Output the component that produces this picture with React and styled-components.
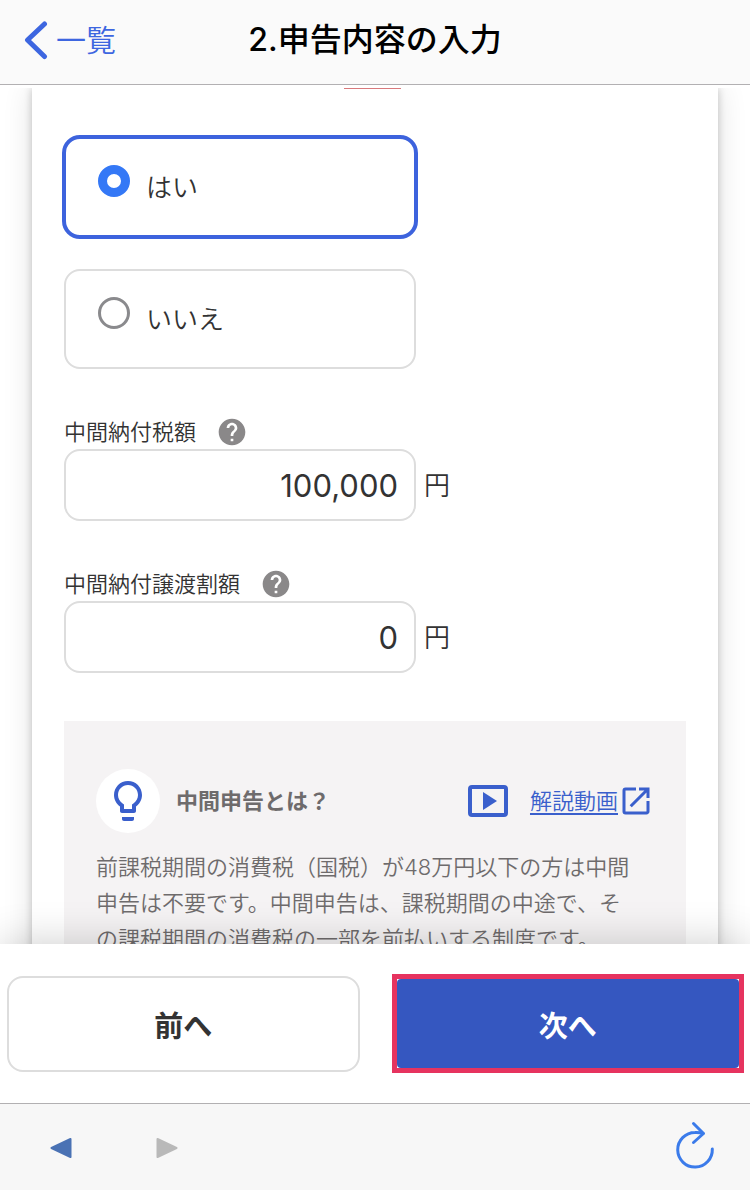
import React, { useState } from 'react';
import styled, { createGlobalStyle, css } from 'styled-components';
import { MdHelp, MdOpenInNew } from 'react-icons/md';

const GlobalStyle = createGlobalStyle`
  * {
    box-sizing: border-box;
  }

  body {
    margin: 0;
    background: #fff;
    color: #333;
    font-family: Inter, "Noto Sans CJK JP", sans-serif;
    font-size: 22px;
    font-weight: 350;
  }

  button, input {
    font: inherit;
    color: inherit;
  }
`;

const Page = styled.div`
  display: flex;
  flex-direction: column;
  height: 100vh;
`;

const Header = styled.header`
  display: grid;
  grid-template-columns: 1fr auto 1fr;
  align-items: center;
  flex: none;
  height: 85px;
  padding: 0 24px 4px;
  border-bottom: 1px solid #b2b0b2;
  background: #fafafa;
`;

const BackLink = styled.a`
  display: flex;
  align-items: center;
  gap: 8px;
  color: #3d66e0;
  font-size: 30px;
  line-height: 40px;
  text-decoration: none;
`;

const PageTitle = styled.h1`
  margin: 0;
  color: #000;
  font-size: 32px;
  font-weight: 500;
  line-height: 40px;
`;

const Content = styled.main`
  flex: 1;
  min-height: 0;
  margin-top: 3px;
  padding: 0 32px;
  overflow: hidden;
`;

const Card = styled.form`
  min-height: 100%;
  padding: 0 32px;
  background: #fff;
  box-shadow: 0 0 8px rgba(0, 0, 0, 0.2), 0 0 28px rgba(0, 0, 0, 0.12);
`;

const Underline = styled.div`
  width: 57px;
  height: 1px;
  margin: 0 auto 48px 280px;
  background: #d9797c;
`;

const Options = styled.div`
  display: flex;
  flex-direction: column;
  gap: 32px;
`;

const Option = styled.label`
  display: flex;
  align-items: center;
  gap: 16px;
  width: 352px;
  height: 100px;
  padding: 0 32px 4px;
  border: 2px solid #ddd;
  border-radius: 16px;
  font-size: 26px;

  ${({ $selected }) => $selected && css`
    width: 356px;
    height: 104px;
    margin: -2px;
    border: 4px solid #3d63dd;
    border-radius: 18px;
  `}
`;

const Radio = styled.input`
  appearance: none;
  width: 32px;
  height: 32px;
  margin: 0 0 8px;
  border: 3px solid #8a8a8d;
  border-radius: 50%;
  background: #fff;

  &:checked {
    border: 9px solid #3478f6;
  }
`;

const Field = styled.div`
  margin-top: 48px;
`;

const FieldHead = styled.div`
  display: flex;
  align-items: center;
  gap: 20px;
  height: 32px;
  padding-bottom: 2px;

  > label {
    padding-bottom: 4px;
  }
`;

const HelpButton = styled.button`
  display: flex;
  padding: 0;
  border: 0;
  background: none;
  color: #8a8889;
`;

const FieldBody = styled.div`
  display: flex;
  align-items: center;
  gap: 8px;
  font-size: 26px;

  > span {
    padding-bottom: 4px;
  }
`;

const AmountInput = styled.input`
  width: 352px;
  height: 72px;
  padding: 0 16px;
  border: 2px solid #ddd;
  border-radius: 16px;
  background: #fff;
  font-family: Inter, sans-serif;
  font-size: 31px;
  font-weight: 400;
  text-align: right;
`;

const Tip = styled.section`
  margin-top: 48px;
  padding: 48px 32px;
  background: #f5f3f4;
  color: #6e6b6c;
`;

const TipHead = styled.div`
  display: flex;
  align-items: center;
`;

const TipIcon = styled.span`
  display: flex;
  align-items: center;
  justify-content: center;
  width: 64px;
  height: 64px;
  border-radius: 50%;
  background: #fff;
  color: #3a5fcc;
`;

const TipTitle = styled.h2`
  flex: 1;
  margin: 0 16px;
  padding-bottom: 4px;
  font-size: 22px;
  font-weight: 600;
`;

const VideoLink = styled.a`
  display: flex;
  align-items: center;
  color: #3a5fcc;
  text-underline-offset: 4px;

  > span {
    margin-left: 22px;
    padding-bottom: 4px;
  }
`;

const TipText = styled.p`
  margin: 16px 12px 0 0;
  line-height: 36px;
`;

const Actions = styled.div`
  position: relative;
  display: grid;
  grid-template-columns: 1fr 1fr;
  align-items: center;
  gap: 32px;
  flex: none;
  padding: 30px 6px 30px 7px;
  background: #fff;
  box-shadow: 0 0 40px rgba(0, 0, 0, 0.2);
`;

const ActionButton = styled.button`
  height: 96px;
  padding: 0;
  border: 2px solid #ddd;
  border-radius: 16px;
  background: #fff;
  font-size: 29px;
  font-weight: 600;
`;

const Highlight = styled.div`
  display: grid;
  border: 5px solid #e6335f;
`;

const NextButton = styled(ActionButton)`
  height: 89px;
  border: 0;
  border-radius: 4px;
  background: #3557c0;
  color: #fff;
`;

const Toolbar = styled.nav`
  position: relative;
  display: flex;
  align-items: center;
  flex: none;
  gap: 84px;
  height: 87px;
  padding: 0 35px 0 50px;
  border-top: 1px solid #b2b0b2;
  background: #f7f7f7;
`;

const ToolButton = styled.button`
  display: flex;
  padding: 2px 0 0;
  border: 0;
  background: none;

  &:last-child {
    margin-left: auto;
    padding: 0 0 4px;
  }
`;

function ChevronIcon() {
  return (
    <svg width="24" height="40" viewBox="0 0 24 40" fill="none" stroke="currentColor" strokeWidth="5" strokeLinecap="round" strokeLinejoin="round">
      <path d="M20.500 4L3.500 20L20.500 36.500" />
    </svg>
  );
}

function BulbIcon() {
  return (
    <svg width="48" height="48" viewBox="0 0 24 24" fill="currentColor" fillRule="evenodd">
      <path d="M12 2C8.100 2 5 5.100 5 9c0 2.400 1.200 4.500 3 5.700V17c0 .6.4 1 1 1h6c.6 0 1-.4 1-1v-2.300c1.800-1.200 3-3.300 3-5.700 0-3.900-3.100-7-7-7zm0 2c2.800 0 5 2.200 5 5 0 1.800-.9 3.300-2.300 4.200l-.7.5V16h-4v-2.300l-.7-.5C7.900 12.300 7 10.800 7 9c0-2.800 2.200-5 5-5z" />
      <path d="M9 20h6v1c0 .6-.4 1-1 1h-4c-.6 0-1-.4-1-1z" />
    </svg>
  );
}

function PlayIcon() {
  return (
    <svg width="40" height="32" viewBox="0 0 40 32">
      <rect x="2" y="2" width="36" height="28" rx="2" fill="none" stroke="currentColor" strokeWidth="4" />
      <path d="M15 7v18l14-9z" fill="currentColor" />
    </svg>
  );
}

function TriangleIcon({ forward }) {
  return (
    <svg width="22" height="22" viewBox="0 0 22 22">
      <path
        d={forward ? 'M1.500 2L20.500 11L1.500 20z' : 'M20.500 2L1.500 11L20.500 20z'}
        fill={forward ? '#b9b9b9' : '#4a72b4'}
        stroke={forward ? '#b9b9b9' : '#4a72b4'}
        strokeWidth="2"
        strokeLinejoin="round"
      />
    </svg>
  );
}

function ReloadIcon() {
  return (
    <svg width="40" height="48" viewBox="0 0 40 48" fill="none" stroke="#3b7bea" strokeWidth="3" strokeLinecap="round" strokeLinejoin="round">
      <path d="M37.300 28A17.300 17.300 0 1 1 20 11.500Q24 11.200 28 12.500" />
      <path d="M18.500 2.500L28.500 12.500L18.500 21.500" />
    </svg>
  );
}

function AmountField({ id, label, defaultValue }) {
  return (
    <Field>
      <FieldHead>
        <label htmlFor={id}>{label}</label>
        <HelpButton type="button" aria-label={`${label}のヘルプ`}>
          <MdHelp size={32} />
        </HelpButton>
      </FieldHead>
      <FieldBody>
        <AmountInput id={id} type="text" inputMode="numeric" defaultValue={defaultValue} />
        <span>円</span>
      </FieldBody>
    </Field>
  );
}

const choices = [
  { value: 'yes', label: 'はい' },
  { value: 'no', label: 'いいえ' },
];

function App() {
  const [answer, setAnswer] = useState('yes');

  return (
    <>
      <GlobalStyle />
      <Page>
        <Header>
          <BackLink href="#list">
            <ChevronIcon />
            一覧
          </BackLink>
          <PageTitle>2.申告内容の入力</PageTitle>
        </Header>
        <Content>
          <Card>
            <Underline />
            <Options role="radiogroup">
              {choices.map(({ value, label }) => (
                <Option key={value} $selected={answer === value}>
                  <Radio
                    type="radio"
                    name="interim"
                    value={value}
                    checked={answer === value}
                    onChange={() => setAnswer(value)}
                  />
                  {label}
                </Option>
              ))}
            </Options>
            <AmountField id="tax" label="中間納付税額" defaultValue="100,000" />
            <AmountField id="transfer" label="中間納付譲渡割額" defaultValue="0" />
            <Tip>
              <TipHead>
                <TipIcon><BulbIcon /></TipIcon>
                <TipTitle>中間申告とは？</TipTitle>
                <VideoLink href="#video">
                  <PlayIcon />
                  <span>解説動画</span>
                  <MdOpenInNew size={36} />
                </VideoLink>
              </TipHead>
              <TipText>
                前課税期間の消費税（国税）が48万円以下の方は中間申告は不要です。中間申告は、課税期間の中途で、その課税期間の消費税の一部を前払いする制度です。
              </TipText>
            </Tip>
          </Card>
        </Content>
        <Actions>
          <ActionButton type="button">前へ</ActionButton>
          <Highlight>
            <NextButton type="button">次へ</NextButton>
          </Highlight>
        </Actions>
        <Toolbar>
          <ToolButton type="button" aria-label="戻る"><TriangleIcon /></ToolButton>
          <ToolButton type="button" aria-label="進む" disabled><TriangleIcon forward /></ToolButton>
          <ToolButton type="button" aria-label="再読み込み"><ReloadIcon /></ToolButton>
        </Toolbar>
      </Page>
    </>
  );
}

export default App;
